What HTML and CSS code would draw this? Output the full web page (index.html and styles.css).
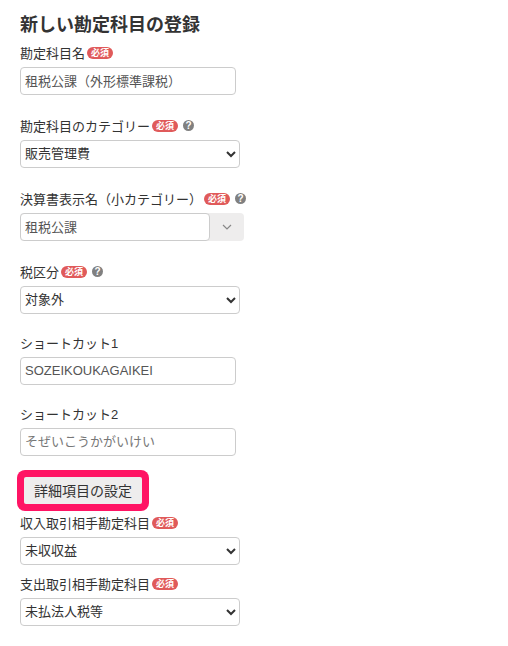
FILE: index.html
```html
<!DOCTYPE html>
<html lang="ja">
<head>
  <meta charset="UTF-8">
  <title>新しい勘定科目の登録</title>
  <link rel="stylesheet" href="styles.css">
</head>
<body>

<form class="account-form">
  <h2>新しい勘定科目の登録</h2>

  <div class="field field-name">
    <label>勘定科目名<span class="required">必須</span></label>
    <input type="text" value="租税公課（外形標準課税）">
  </div>

  <div class="field">
    <label>勘定科目のカテゴリー<span class="required">必須</span><span class="help">?</span></label>
    <select><option>販売管理費</option></select>
  </div>

  <div class="field">
    <label>決算書表示名（小カテゴリー）<span class="required">必須</span><span class="help">?</span></label>
    <div class="combo">
      <input type="text" value="租税公課">
      <div class="combo-toggle">
        <svg width="10" height="6" viewBox="0 0 10 6"><path d="M1 1l4 4 4-4" fill="none" stroke="#888" stroke-width="1.2"/></svg>
      </div>
    </div>
  </div>

  <div class="field">
    <label>税区分<span class="required">必須</span><span class="help">?</span></label>
    <select><option>対象外</option></select>
  </div>

  <div class="field field-plain">
    <label>ショートカット1</label>
    <input type="text" value="SOZEIKOUKAGAIKEI">
  </div>

  <div class="field field-plain">
    <label>ショートカット2</label>
    <input type="text" placeholder="そぜいこうかがいけい">
  </div>

  <div class="detail-wrap">
    <button type="button">詳細項目の設定</button>
  </div>

  <div class="field field-tight">
    <label>収入取引相手勘定科目<span class="required">必須</span></label>
    <select><option>未収収益</option></select>
  </div>

  <div class="field field-tight">
    <label>支出取引相手勘定科目<span class="required">必須</span></label>
    <select><option>未払法人税等</option></select>
  </div>
</form>

</body>
</html>
```

FILE: styles.css
```css
body {
  font-family: "Liberation Sans", "Noto Sans CJK JP", sans-serif;
  margin: 0;
  padding: 0;
  background-color: #fff;
  color: #333;
}
.account-form {
  padding: 15px 0 0 20px;
  width: 230px;
}
h2 {
  margin: 0;
  font-size: 18px;
  line-height: 20px;
  font-weight: bold;
  color: #333;
}
.field {
  margin-bottom: 22px;
}
.field-name {
  margin-top: 9px;
}
.field-tight {
  margin-bottom: 10px;
}
label {
  display: flex;
  align-items: center;
  height: 17px;
  margin-bottom: 6px;
  font-size: 13px;
  white-space: nowrap;
}
.field-plain label {
  height: 13px;
  margin-bottom: 8px;
}
.required {
  flex-shrink: 0;
  margin-left: 2px;
  padding: 0 4px;
  background-color: #e05a5a;
  color: #fff;
  border-radius: 7px;
  font-size: 9px;
  font-weight: bold;
  line-height: 12px;
}
.help {
  flex-shrink: 0;
  margin-left: 5px;
  width: 11px;
  height: 11px;
  border-radius: 50%;
  background-color: #808080;
  color: #fff;
  font-size: 10px;
  font-weight: bold;
  line-height: 11px;
  text-align: center;
}
input[type="text"] {
  box-sizing: border-box;
  display: block;
  width: 216px;
  height: 28px;
  padding: 0 4px 2px;
  border: 1px solid #ccc;
  border-radius: 4px;
  font-family: inherit;
  font-size: 13px;
  color: #555;
  background-color: #fff;
}
input::placeholder {
  color: #777;
}
select {
  box-sizing: border-box;
  display: block;
  width: 220px;
  height: 28px;
  padding: 0 0 2px 0;
  border: 1px solid #ccc;
  border-radius: 4px;
  font-family: inherit;
  font-size: 13px;
  color: #333;
  background-color: #fff;
}
.combo {
  display: flex;
  width: 224px;
  background-color: #eeeded;
  border-radius: 4px;
}
.combo-toggle {
  flex-grow: 1;
  display: flex;
  align-items: center;
  justify-content: center;
}
.combo input[type="text"] {
  width: 190px;
}
.detail-wrap {
  margin: -8px 0 3px -3px;
  width: 118px;
  padding: 7px;
  background-color: #ff1464;
  border-radius: 8px;
}
.detail-wrap button {
  display: block;
  width: 100%;
  height: 27px;
  padding: 0 0 2px;
  border: none;
  border-radius: 2px;
  background-color: #eeeded;
  color: #333;
  font-family: inherit;
  font-size: 14px;
}
```
